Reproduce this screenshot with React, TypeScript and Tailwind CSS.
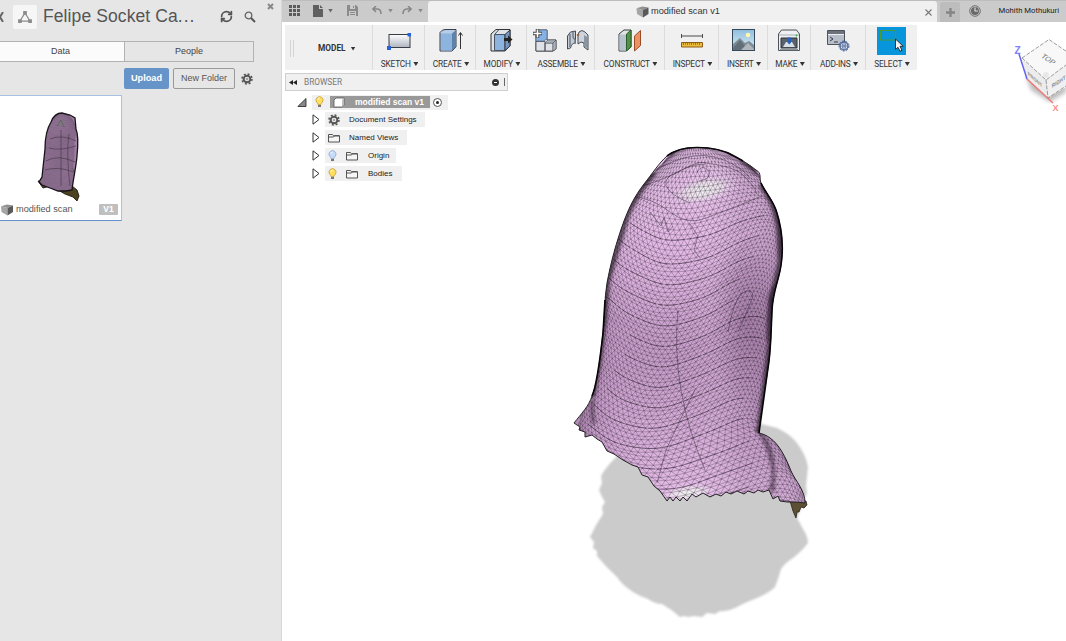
import React from "react";
import { RefreshCw } from "lucide-react";

type Pt = [number, number];

const OUTLINE =
  "M697 147.500 C687 147.500 676 149 667 156 C659 163 652 174 644 184 C634 197 629 208 624 221 C616 243 611 262 607 283 C604 300 605 318 603 333 C600 360 597 385 592 396 C589 406 581 414 574 423 L580 427 L579 430 L585 432 L585 437 L592 435 L597 439 L602 442 L607 451 L614 454 L623 460 L632 465 L638 467 L642 475 L648 477 L654 486 L660 491 L667 501 L670 497 L673 501 L676 497 L680 501 L683 497 L687 501 L692 494 L696 497 L703 493 L710 497 L716 494 L721 496 L726 492 L731 494 L737 491 L744 494 L748 491 L754 493 L758 490 L763 492 L769 490 L773 499 L778 496 L780 501 L787 502 L796 502 L805 503 C805 490 796 482 791 471 C786 458 779 444 770 438 C766 435 763 434 759 433 C760 415 765 390 768 368 C771 350 771 330 772 310 C773 290 779 280 781 265 C784 245 781 225 776 210 C772 199 765 192 761 183 C759 178 762 173 756 170 C750 165 742 160 734 156 C724 150 710 147.500 697 147.500 Z";

const SHADOW =
  "M617 456 Q609 464 604 471 L601 476 L602 483 L599 490 L602 497 L605 502 L602 507 L603 514 Q596 524 590 537 L594 542 L593 548 L597 551 L597 556 Q606 567 617 577 Q622 585 633 592 Q641 597 648 599 Q655 604 662 604 Q671 609 680 617 L684 616 L688 617 L694 616 L702 617 L707 613 L715 614 L720 611 Q727 612 735 608 Q746 602 757 598 Q769 593 775 587 Q779 577 781 569 Q786 562 793 558 Q803 550 808 543 Q808 537 803 529 L797 518 L807 493 L806 486 L808 467 Q806 455 797 443 Q790 434 777 428 L758 423 L700 430 Z";

const LEFT: Pt[] = [[130, 686], [147, 678], [157, 666], [177, 649], [192, 638], [213, 627], [247, 615], [280, 607], [307, 604], [333, 603], [363, 598], [393, 593], [410, 586], [440, 579], [520, 575]];
const RIGHT: Pt[] = [[130, 715], [148, 722], [163, 746], [180, 761], [193, 767], [213, 777], [247, 782], [273, 780], [300, 773], [330, 772], [373, 768], [410, 763], [433, 766], [450, 782], [472, 792], [490, 803], [520, 806]];

function edge(table: Pt[], y: number): number {
  for (let i = 1; i < table.length; i++) {
    if (y <= table[i][0]) {
      const a = table[i - 1];
      const b = table[i];
      return a[1] + ((b[1] - a[1]) * Math.max(0, y - a[0])) / (b[0] - a[0]);
    }
  }
  return table[table.length - 1][1];
}

const COLS = 36;
const ROWS = 104;

function vertex(i: number, j: number): Pt {
  const u = (i + (j % 2) * 0.5) / COLS;
  const base = 126 + j * 4.1;
  const t = Math.sin((u - 0.5) * Math.PI * 0.86) / 2 / Math.sin(Math.PI * 0.43) + 0.5;
  const ramp = Math.min(1, Math.max(0, (base - 170) / 70));
  const wave = Math.cos(((u - 0.4) * Math.PI * 2) / 0.86);
  const y = base + wave * 15 * ramp - (1 - ramp) * Math.cos((u - 0.5) * Math.PI) * 5;
  const l = edge(LEFT, base);
  const r = edge(RIGHT, base);
  return [l + (r - l) * t + Math.sin(j * 0.13 + u * 6) * 2 + Math.sin(i * 12.9 + j * 7.3) * 0.5, y + Math.sin(i * 7.1 + j * 3.7) * 0.45];
}

function polyline(points: Pt[]): string {
  return points.map((p, k) => (k ? "L" : "M") + p[0].toFixed(1) + " " + p[1].toFixed(1)).join("");
}

function buildMesh() {
  let rows = "";
  let strong = "";
  let diagonals = "";
  for (let j = 0; j < ROWS; j++) {
    const line: Pt[] = [];
    for (let i = 0; i <= COLS; i++) {
      line.push(vertex(i, j));
      const down = vertex(i, j + 1);
      const side = vertex(j % 2 ? i + 1 : i - 1, j + 1);
      diagonals += polyline([side, vertex(i, j), down]);
    }
    rows += polyline(line);
    if (j > 20 && j % 5 === 0) {
      const start = (j * 7) % 9;
      strong += polyline(line.slice(start, start + 26));
    }
  }
  return { rows, diagonals, strong };
}

const MESH = buildMesh();

const CONTOURS = [
  "M642 186 Q668 178 684 169 T706 163 Q730 166 741 173 Q754 185 757 194",
  "M666 186 Q664 177 676 173 Q690 164 706 164 M666 186 Q672 196 688 202",
  "M697 172 Q702 164 708 170 Q711 175 706 179 L699 181",
  "M640 178 Q664 164 684 158 T724 160 Q740 166 750 178",
  "M632 196 Q652 198 670 212 T706 218 Q738 206 762 196",
  "M650 212 L661 226 L664 218 L668 232 L673 226",
  "M690 224 L698 236 L694 250 L700 258",
  "M705 470 Q688 430 681 390 Q674 350 678 310",
  "M657 483 L666 450 L680 420 L695 390",
  "M728 332 Q733 302 742 293 Q752 287 753 296 Q748 310 738 332",
];

const DARK_FOLDS = "M757 428 Q768 444 771 460 Q776 474 770 490 M761 434 Q777 450 773 492 M593 400 Q591 412 594 424 M774 286 Q767 310 768 341";

function ScanModel() {
  return (
    <svg className="absolute inset-0 h-full w-full" viewBox="282 22 784 619" aria-label="Modified scan mesh">
      <defs>
        <clipPath id="scan-clip"><path d={OUTLINE} /></clipPath>
        <linearGradient id="scan-side" x1="0" x2="1">
          <stop offset="0" stopColor="#54385b" stopOpacity=".3" />
          <stop offset=".2" stopColor="#bd8bc1" stopOpacity=".08" />
          <stop offset=".5" stopColor="#fff" stopOpacity="0" />
          <stop offset=".72" stopColor="#6b4a70" stopOpacity=".12" />
          <stop offset="1" stopColor="#493050" stopOpacity=".12" />
        </linearGradient>
        <linearGradient id="scan-light" x1="0" x2="0" y1="0" y2="1">
          <stop offset="0" stopColor="#f2cdf5" stopOpacity=".8" />
          <stop offset=".3" stopColor="#f2cdf5" stopOpacity=".2" />
          <stop offset=".55" stopColor="#8f6a92" stopOpacity=".16" />
          <stop offset="1" stopColor="#f2cdf5" stopOpacity=".5" />
        </linearGradient>
        <radialGradient id="scan-top"><stop stopColor="#f1f1f1" /><stop offset=".5" stopColor="#eee6ef" stopOpacity=".85" /><stop offset="1" stopColor="#eccdf0" stopOpacity="0" /></radialGradient>
        <radialGradient id="scan-shade"><stop stopColor="#664269" stopOpacity=".32" /><stop offset="1" stopColor="#664269" stopOpacity="0" /></radialGradient>
        <filter id="shadow-soften"><feGaussianBlur stdDeviation="0.8" /></filter>
        <filter id="fold-soften"><feGaussianBlur stdDeviation="1.5" /></filter>
      </defs>
      <path d={SHADOW} fill="#cbcbcb" filter="url(#shadow-soften)" />
      <path d="M790 501 L806 501 L807 505 L804 508 L801 507 L799 512 L797 512 L796 518 L793 511 Z" fill="#5c5034" stroke="#292416" strokeWidth=".8" />
      <g clipPath="url(#scan-clip)">
        <path d={OUTLINE} fill="#deb3e0" />
        <path d={OUTLINE} fill="url(#scan-light)" />
        <path d={OUTLINE} fill="url(#scan-side)" />
        <ellipse cx="748" cy="320" rx="38" ry="85" fill="url(#scan-shade)" />
        <ellipse cx="660" cy="350" rx="68" ry="72" fill="url(#scan-shade)" opacity=".35" />
        <ellipse cx="704" cy="190" rx="36" ry="14" transform="rotate(-14 704 190)" fill="url(#scan-top)" />
        <ellipse cx="688" cy="493" rx="28" ry="9" transform="rotate(-8 688 493)" fill="url(#scan-top)" />
        <path d={MESH.rows} fill="none" stroke="#241929" strokeWidth=".5" opacity=".55" />
        <path d={MESH.diagonals} fill="none" stroke="#241929" strokeWidth=".45" opacity=".6" />
        <path d={MESH.strong} fill="none" stroke="#1b1420" strokeWidth=".7" strokeDasharray="14 2 5 1" opacity=".6" />
        {CONTOURS.map((d) => <path key={d} d={d} fill="none" stroke="#201725" strokeWidth=".7" opacity=".6" />)}
        <path d={DARK_FOLDS} fill="none" stroke="#28172b" strokeWidth="3.500" opacity=".5" filter="url(#fold-soften)" />
        <path d="M654 172 Q636 194 627 215 L607 282 L604 320 L598 365 L592 397 M742 160 L758 171 M761 184 Q775 203 779 225 L781 262 L772 300 L771 340 L762 410 L759 433" fill="none" stroke="#150d18" strokeWidth="6" opacity=".6" filter="url(#fold-soften)" />
      </g>
      <path d={OUTLINE} fill="none" stroke="#252027" strokeWidth="1" />
      <path d="M667 156 C676 149 687 147.500 697 147.500 C710 147.500 724 150 734 156 L743 161 M761 183 C765 192 772 199 776 210 C781 225 784 245 781 265 C779 280 773 290 772 310 C771 330 771 350 768 368 L759 433 M592 396 C597 385 600 360 603 333 L605 300" fill="none" stroke="#090609" strokeWidth="1.600" />
    </svg>
  );
}

function ViewCube() {
  return (
    <svg className="absolute right-0 top-[13px] h-[86px] w-[60px]" viewBox="1006 35 60 86">
      <defs><filter id="cube-shadow"><feGaussianBlur stdDeviation="2" /></filter></defs>
      <path d="M1026 76 L1031 90 L1050 102 L1066 92 L1066 78 Z" fill="#bbb" filter="url(#cube-shadow)" />
      <path d="M1022 58 L1049 39.500 L1076 58 L1046 80 Z" fill="#f8f8f8" />
      <path d="M1022 58 L1046 80 L1048 98 L1027 79 Z" fill="#ececec" />
      <path d="M1046 80 L1076 58 L1073 83 L1048 98 Z" fill="#f0f0f0" />
      <path d="M1022 58 L1049 39.500 L1076 58 M1022 58 L1046 80 L1070 62 M1046 80 L1048 98 L1066 86" fill="none" stroke="#858585" strokeDasharray="4 1.500" strokeWidth=".8" />
      <circle cx="1046" cy="75" r="3" fill="#e8e8e8" />
      <path d="M1019 54 L1027 79" stroke="#6262ee" strokeWidth="1.500" />
      <path d="M1027 79 L1053 103" stroke="#ee7777" strokeWidth="1.400" />
      <g fontFamily="Liberation Sans, sans-serif">
        <text x="1014.500" y="53.500" fontSize="10" fontWeight="700" fill="#8080fa">Z</text>
        <text x="1052.500" y="111" fontSize="9" fontWeight="700" fill="#fa8a8a">X</text>
        <text fontSize="8" fill="#727272" transform="matrix(.75 .5 -.65 .65 1040.500 57)">TOP</text>
        <text fontSize="5.500" fill="#888" fontWeight="700" transform="matrix(.75 .68 .1 1 1028 75)">FRONT</text>
        <text fontSize="5.500" fill="#888" fontWeight="700" transform="matrix(.8 -.52 .1 1 1052 88)">RIGHT</text>
      </g>
    </svg>
  );
}

function Cube({ className }: { className: string }) {
  return (
    <svg className={className} viewBox="0 0 12 12">
      <path d="M0 2.300 L6 .5 L12 1.500 L6.500 4 Z" fill="#909090" />
      <path d="M0 2.300 L6.500 4 V11.500 L0.500 8 Z" fill="#a5a5a5" />
      <path d="M6.500 4 L12 1.500 V8 L6.500 11.500 Z" fill="#595959" />
    </svg>
  );
}

function Gear({ className }: { className: string }) {
  return (
    <svg className={className} viewBox="0 0 14 14" fill="none" stroke="#555">
      <circle cx="7" cy="7" r="3.900" strokeWidth="2.300" />
      <circle cx="7" cy="7" r="5.800" strokeWidth="1.800" strokeDasharray="2.300 2.255" />
      <circle cx="7" cy="7" r="1" strokeWidth=".6" />
    </svg>
  );
}

function ToolIcon({ name }: { name: string }) {
  switch (name) {
    case "SKETCH":
      return <svg className="h-[26px] w-[26px]" viewBox="0 0 26 26"><defs><linearGradient id="sk" x2="0" y2="1"><stop stopColor="#fff" /><stop offset="1" stopColor="#aeb4c0" /></linearGradient></defs><rect x="3" y="6.500" width="21" height="13" fill="url(#sk)" stroke="#383c43" /><path d="M1 18h4v4H1zM21.500 5h3.500v3.500h-3.500z" fill="#2761dc" /></svg>;
    case "CREATE":
      return <svg className="h-[26px] w-[26px]" viewBox="0 0 26 26"><path d="M3 4.500 Q5 1.500 8 1.500 H19 V19 L15 23 H3 Z" fill="#b5cbe6" stroke="#39414d" /><path d="M4 5.500h11v17H4z" fill="#8db3df" /><path d="M15 5.500l4-3.500V19l-4 3.500z" fill="#5f82ab" /><path d="M23.500 21V5m-2 2.500 2-3 2 3" fill="none" stroke="#333" /></svg>;
    case "MODIFY":
      return <svg className="h-[26px] w-[26px]" viewBox="0 0 26 26"><path d="M3 6 L8 1.500 H22 V18 L17 23 H3 Z" fill="#dfe3e8" stroke="#333" /><path d="M7 6 L11 1.500 M6.500 6.500h10.500V22.500H6.500z" fill="#8db3df" stroke="#485464" /><path d="M17 6.500l5-4.500v16l-5 4.500z" fill="#7797bf" stroke="#334" /><path d="M16 10h4V7.500l4.500 4-4.500 4V13h-4z" fill="#222" /></svg>;
    case "ASSEMBLE":
      return <svg className="h-[26px] w-[60px]" viewBox="0 0 60 26"><path d="M5 5l3-3h8v10h9v9l-3 2H5z" fill="#cfd3da" stroke="#343a42" /><path d="M5 5l3-3h8v8l-3 3H5z" fill="#85b1e5" stroke="#52677f" strokeWidth=".6" /><path d="M5 13.500h9V23H5zM14 15h8v8h-8z" fill="#dfe2e7" stroke="#454a52" strokeWidth=".8" /><path d="M22 15l3-3v9l-3 2zM14 15l3-3h8l-3 3z" fill="#a9b2bd" stroke="#555" strokeWidth=".5" /><path d="M6.500 1v9M2 5.500h9" stroke="#444" strokeWidth="3.500" /><path d="M6.500 1.500v8M2.500 5.500h8" stroke="#fff" strokeWidth="1.600" /><path d="M36.500 21V8l3-4 5-1v12q-4 0-5 5z" fill="#c6ccd4" stroke="#434b55" /><path d="M39 6v13M42 4v5l2 3v4" stroke="#77818d" strokeWidth="1.600" fill="none" /><path d="M48 4q3-3 6 0l3 3v15l-4-3v-4l-3-1-3 2V8z" fill="#ced4dc" stroke="#434b55" /><path d="M53 7l3 2v11l-3-2z" fill="#8995a3" /><circle cx="47" cy="7" r="1.300" fill="#a5653d" /></svg>;
    case "CONSTRUCT":
      return <svg className="h-[26px] w-[28px]" viewBox="0 0 28 26"><path d="M3 6l5-4h7v17l-5 4H3z" fill="#e2e5e8" stroke="#383d42" /><path d="M3.500 6.500h7v16h-7z" fill="#b9c3ce" /><path d="M10.500 6l4.500-4v17l-4.500 4z" fill="#559044" stroke="#285f2b" /><path d="M18.500 8l6-5.500v15l-6 5.500z" fill="#eb9362" stroke="#9c4c25" /></svg>;
    case "INSPECT":
      return <svg className="h-[26px] w-[26px]" viewBox="0 0 26 26"><path d="M2.500 6v4m0-2h21m0-2v4" fill="none" stroke="#4a4b4d" /><path d="M2.500 14.500h21v4.500h-21z" fill="#e9bd3b" stroke="#8f5c19" /><path d="M4.500 15v2m2-2v1.500m2-1.500v2m2-2v1.500m2-1.500v2m2-2v1.500m2-1.500v2m2-2v1.500m2-1.500v2" stroke="#755a1d" strokeWidth=".7" /></svg>;
    case "INSERT":
      return <svg className="h-[26px] w-[26px]" viewBox="0 0 26 26"><defs><linearGradient id="sky" x2="0" y2="1"><stop stopColor="#8fbfe0" /><stop offset="1" stopColor="#ddecee" /></linearGradient></defs><rect x="2.500" y="1.500" width="22" height="21" fill="url(#sky)" stroke="#354958" /><circle cx="18" cy="7" r="2.300" fill="#fff5b0" /><path d="M3 16l7-6 5 5 4-2 5 4v5H3z" fill="#7f8b95" /><path d="M3 20l7-8 8 10H3z" fill="#626f7a" /><path d="M18 15l6 6v1H11z" fill="#b0b8be" /></svg>;
    case "MAKE":
      return <svg className="h-[26px] w-[26px]" viewBox="0 0 26 26"><path d="M2.500 6l3-4h15l3 4v16.500h-21z" fill="#eef0f3" stroke="#4b5259" /><path d="M3 7h20" stroke="#aab0b7" /><path d="M5 10h16v10H5z" fill="#59636e" stroke="#333" /><path d="M7 19l3-5h6l3 5z" fill="#d7e0e9" /><path d="M11.500 9.500h3.500v5l-1.700 2-1.800-2z" fill="#2862b8" /><path d="M4 21.500h18" stroke="#8b949b" strokeWidth="1.500" /><circle cx="20.500" cy="7.500" r=".9" fill="#2bbd38" /></svg>;
    case "ADD-INS":
      return <svg className="h-[26px] w-[28px]" viewBox="0 0 28 26"><path d="M3.500 2.500h17v14h-17z" fill="#b8bec9" stroke="#4d535c" /><path d="M4 3h16v3H4z" fill="#6d737d" /><path d="M4 6.500h16" stroke="#eee" /><path d="M6 9l3 2-3 2m4 1h4" fill="none" stroke="#343c49" /><circle cx="20" cy="18" r="4" fill="#d5dfef" stroke="#50699a" strokeWidth="1.300" /><circle cx="20" cy="18" r="5" fill="none" stroke="#50699a" strokeWidth="1" strokeDasharray="2 1.500" /><path d="M16 18h8m-4-4v8m-2-7q2 3 0 6m4-6q-2 3 0 6" fill="none" stroke="#50699a" strokeWidth=".7" /></svg>;
    default:
      return <svg className="h-[28px] w-[29px]" viewBox="0 0 29 28"><path fill="#0795dc" d="M0 0h29v28H0z" /><path d="M3.500 3.500h15v9.500h-15z" fill="none" stroke="#4a9a35" strokeWidth="1.200" /><path d="M18.500 12v10.500l2.500-2.200 2 4 2-1-2-4h3.200z" fill="#f4f4f4" stroke="#222" strokeWidth=".9" /></svg>;
  }
}

const TOOLS = [
  { name: "SKETCH", box: "w-[52px]" },
  { name: "CREATE", box: "w-[51px]" },
  { name: "MODIFY", box: "w-[51px]" },
  { name: "ASSEMBLE", box: "w-[68px]" },
  { name: "CONSTRUCT", box: "w-[70px]" },
  { name: "INSPECT", box: "w-[54px]" },
  { name: "INSERT", box: "w-[49px]" },
  { name: "MAKE", box: "w-[43px]" },
  { name: "ADD-INS", box: "w-[55px]" },
  { name: "SELECT", box: "w-[51px]" },
];

function Caret({ className = "bg-[#333]" }: { className?: string }) {
  return <span className={`block h-[4px] w-[5px] shrink-0 [clip-path:polygon(0_0,100%_0,50%_100%)] ${className}`} />;
}

function Toolbar() {
  return (
    <div className="ml-[3px] mt-[3px] flex h-[45px] w-[632px] bg-[#f0f0f0]">
      <div className="flex w-[88px] items-center border-r border-[#dcdcdc] pl-[5px] pt-[2px]">
        <span className="h-[17px] w-[4px] border-x border-[#d5d5d5]" />
        <span className="ml-[24px] font-[Roboto,sans-serif] text-[8.300px] font-bold leading-none text-[#333]">MODEL</span>
        <span className="ml-[5px]"><Caret /></span>
      </div>
      {TOOLS.map((t) => (
        <div key={t.name} className={`flex shrink-0 flex-col items-center border-r ${t.box} ${t.name === "SELECT" ? "border-transparent pt-[2px]" : "border-[#dcdcdc] pt-[3px]"}`}>
          <div className={`flex shrink-0 items-start ${t.name === "SELECT" ? "h-[30px]" : "h-[29px]"}`}><ToolIcon name={t.name} /></div>
          <div className="mt-[2px] flex items-center gap-[2.500px] pl-[2px] font-[Roboto,sans-serif] text-[8.300px] leading-[10px] tracking-[-0.15px] text-[#333]">
            <span>{t.name}</span><Caret />
          </div>
        </div>
      ))}
    </div>
  );
}

function Folder() {
  return <svg className="h-[10px] w-[12px] shrink-0" viewBox="0 0 12 10"><path d="M.5 9V1.500h4l1 1.300h6V9zM.5 4h5l1-1.200h5" fill="#f6f6f6" stroke="#444" strokeWidth=".9" /></svg>;
}

function Bulb({ off = false }: { off?: boolean }) {
  return <svg className="h-[12px] w-[9px] shrink-0" viewBox="0 0 9 12"><path d="M3 8.500Q3 7 1.500 6A3.500 3.500 0 1 1 7.500 6Q6 7 6 8.500z" fill={off ? "#c5dcfb" : "#ffe060"} stroke={off ? "#8ea6cf" : "#c79c35"} strokeWidth=".8" /><path d="M3 9h3v2H3z" fill="#777" /><path d="M3 3.500Q3 2 4.500 2" fill="none" stroke="#fff" /></svg>;
}

function Arrow() {
  return <svg className="h-[11px] w-[8px] shrink-0" viewBox="0 0 8 11"><path d="M1 .8l6 4.700-6 4.700z" fill="#fff" stroke="#333" /></svg>;
}

function TreeRow({ width, icon, bulb, label }: { width: string; icon: React.ReactNode; bulb?: React.ReactNode; label: string }) {
  return (
    <div className="flex h-[18px] items-center pb-px pl-[27px]">
      <Arrow />
      <div className={`ml-[5px] flex h-[15px] items-center bg-[#f0f0f0] pl-[2px] ${width}`}>
        {bulb && <span className="mr-[7px] flex w-[11px] justify-center">{bulb}</span>}
        <span className="flex w-[13px] justify-center">{icon}</span>
        <span className={`whitespace-nowrap pt-px text-[8px] text-[#222] ${bulb ? "ml-[10px]" : "ml-[9px]"}`}>{label}</span>
      </div>
    </div>
  );
}

function Browser() {
  return (
    <div className="ml-[3px] mt-[3px] w-[223px]">
      <div className="flex h-[18px] items-center border border-[#cfcfcf] bg-[#f0f0f0] pl-[3px] pr-[2px] text-[8.300px] text-[#777]">
        <svg className="h-[5px] w-[8px]" viewBox="0 0 8 5"><path d="M4 0v5L0 2.500zm4 0v5L4 2.500z" fill="#222" /></svg>
        <span className="ml-[7px] font-[Roboto,sans-serif] leading-none">BROWSER</span>
        <span className="ml-auto flex h-[7px] w-[7px] items-center justify-center rounded-full bg-[#333]"><span className="h-px w-[3px] bg-white" /></span>
        <span className="ml-[4px] h-[8px] w-[2px] border-r border-[#666]" />
      </div>
      <div className="pt-[2px]">
        <div className="flex h-[18px] items-center pl-[12px]">
          <svg className="h-[9px] w-[10px]" viewBox="0 0 10 9"><path d="M9 .5v8H.8z" fill="#888" stroke="#222" strokeWidth=".8" /></svg>
          <div className="ml-[5px] flex h-[15px] w-[136px] items-center bg-[#f0f0f0] pl-[3px]">
            <Bulb />
            <div className="ml-[6px] flex h-[12px] w-[100px] items-center bg-[#999] pl-[3px]">
              <svg className="h-[11px] w-[12px]" viewBox="0 0 12 11"><path d="M1 3l2-2h8v7l-2 2H1z" fill="#fff" stroke="#555" strokeWidth=".8" /><path d="M9 3l2-2v7l-2 2z" fill="#bbb" /></svg>
              <span className="ml-[10px] whitespace-nowrap text-[8.500px] font-bold text-white">modified scan v1</span>
            </div>
            <span className="ml-[3px] flex h-[9px] w-[9px] items-center justify-center rounded-full border border-[#555] bg-white"><span className="h-[3px] w-[3px] rounded-full bg-[#222]" /></span>
          </div>
        </div>
        <TreeRow width="w-[100px]" icon={<Gear className="h-[12px] w-[12px]" />} label="Document Settings" />
        <TreeRow width="w-[82px]" icon={<Folder />} label="Named Views" />
        <TreeRow width="w-[71px]" bulb={<Bulb off />} icon={<Folder />} label="Origin" />
        <TreeRow width="w-[77px]" bulb={<Bulb />} icon={<Folder />} label="Bodies" />
      </div>
    </div>
  );
}

function TitleBar() {
  return (
    <div className="flex h-[22px] shrink-0 items-end border-t border-[#bdbdbd] bg-[#cbcbcb]">
      <div className="flex h-[21px] w-[146px] shrink-0 items-center pb-[2px] pl-[7px]">
        <svg className="h-[11px] w-[11px]" viewBox="0 0 11 11"><path d="M0 0h3v3H0zm4 0h3v3H4zm4 0h3v3H8zM0 4h3v3H0zm4 0h3v3H4zm4 0h3v3H8zM0 8h3v3H0zm4 0h3v3H4zm4 0h3v3H8z" fill="#5b5b5b" /></svg>
        <svg className="ml-[13px] h-[12px] w-[11px]" viewBox="0 0 11 12"><path d="M0 0h6v4h4v8H0zM7 0l3 3H7z" fill="#606060" /></svg>
        <span className="ml-[4px]"><Caret className="bg-[#666]" /></span>
        <svg className="ml-[14px] h-[11px] w-[11px]" viewBox="0 0 11 11"><path d="M0 0h9l2 2v9H0z" fill="#8b8b8b" /><path d="M3 0h5v4H3zM2 6h7v5H2z" fill="#cbcbcb" /><path d="M6 1h1v2H6zM3 7h5v1H3zm0 2h5v1H3z" fill="#8b8b8b" /></svg>
        <svg className="ml-[14px] h-[9px] w-[10px]" viewBox="0 0 10 9"><path d="M4 0L1 3l3 3M1 3h4q4 0 4 5" fill="none" stroke="#888" strokeWidth="1.600" /></svg>
        <span className="ml-[6px]"><Caret className="bg-[#888]" /></span>
        <svg className="ml-[9px] h-[9px] w-[10px]" viewBox="0 0 10 9"><path d="M6 0l3 3-3 3M9 3H5Q1 3 1 8" fill="none" stroke="#888" strokeWidth="1.600" /></svg>
        <span className="ml-[6px]"><Caret className="bg-[#888]" /></span>
      </div>
      <div className="flex h-[21px] w-[509px] shrink-0 items-center rounded-t-[3px] bg-[#f0f0f0] pl-[208px] pr-[5px] pt-px">
        <Cube className="h-[12px] w-[13px]" />
        <span className="ml-[2px] whitespace-nowrap text-[9.200px] text-[#333]">modified scan v1</span>
        <svg className="ml-auto h-[7px] w-[7px]" viewBox="0 0 7 7"><path d="M.5.5l6 6m0-6l-6 6" stroke="#777" strokeWidth="1.100" /></svg>
      </div>
      <div className="ml-[3px] flex h-[20px] w-[20px] shrink-0 items-center justify-center rounded-t-[2px] bg-[#bdbdbd]">
        <svg className="h-[9px] w-[9px]" viewBox="0 0 9 9"><path d="M4.500 0v9M0 4.500h9" stroke="#858585" strokeWidth="2.300" /></svg>
      </div>
      <div className="flex h-[20px] flex-1 items-center justify-between pb-[3px] pl-[9px] pr-[7px]">
        <svg className="h-[12px] w-[12px]" viewBox="0 0 12 12"><circle cx="6" cy="6" r="5.300" fill="none" stroke="#707070" /><circle cx="6" cy="6" r="4" fill="#696969" /><path d="M6 2.500V6h3" fill="none" stroke="#ddd" strokeWidth="1.200" /></svg>
        <span className="whitespace-nowrap font-[Roboto,sans-serif] text-[7.700px] text-[#222]">Mohith Mothukuri</span>
      </div>
    </div>
  );
}

const THUMB_BODY = "M62 7 C57 7 53 11 51 16 C46 24 45 33 45 43 C44 53 43 62 42 71 L39 76 L42 79 L50 82 L58 85 L66 85 L72 84 C73 74 76 62 77 50 C78 40 79 30 76 23 L75 12 L70 9 Z";

function Thumbnail() {
  return (
    <svg className="h-[98px] w-[121px]" viewBox="0 0 121 98">
      <defs><clipPath id="thumb-clip"><path d={THUMB_BODY} /></clipPath></defs>
      <path d="M38 75 L43 82 L50 80 L58 84 L65 88 L73 91 L77 95 L79 90 L77 84 L72 80 Z" fill="#4a4220" stroke="#1e1b10" strokeWidth=".9" />
      <g clipPath="url(#thumb-clip)">
        <path d={THUMB_BODY} fill="#a07ea3" />
        <path d={MESH.rows} transform="translate(-60 -22) scale(.174 .2)" fill="none" stroke="#2c2230" strokeWidth="1.400" opacity=".65" />
        <path d="M57 20 L61 14 L64 21 M50 33 Q62 28 76 35 M49 42 Q60 45 76 40 M46 55 Q58 48 75 56 M45 64 Q58 60 74 66 M61 24 V80 M69 28 Q66 48 70 80" fill="none" stroke="#332838" strokeWidth=".7" opacity=".7" />
        <ellipse cx="61" cy="17" rx="4" ry="4" fill="#777979" opacity=".55" />
      </g>
      <path d={THUMB_BODY} fill="none" stroke="#171218" strokeWidth="1.300" />
    </svg>
  );
}

function DataPanel() {
  return (
    <aside className="relative flex w-[282px] shrink-0 flex-col border-r border-[#d8d8d8] bg-[#e6e6e6]">
      <svg className="absolute left-[267px] top-[3px] h-[7px] w-[7px]" viewBox="0 0 7 7"><path d="M1 1l5 5m0-5L1 6" stroke="#888" strokeWidth="2" /></svg>
      <header className="flex h-[41px] shrink-0 items-center pb-[8px]">
        <svg className="h-[10px] w-[4px]" viewBox="0 0 4 10"><path d="M3 0L0 5l3 5" fill="none" stroke="#666" strokeWidth="2" /></svg>
        <div className="ml-[9px] flex h-[24px] w-[24px] items-center justify-center rounded-[2px] bg-[#f6f6f6]">
          <svg className="h-[12px] w-[14px]" viewBox="0 0 15 13"><path d="M7.500 2L2 11h11z" fill="none" stroke="#8c8c8c" strokeWidth="1.300" /><path d="M5.500 0h4v4h-4zM0 9h4v4H0zm11 0h4v4h-4z" fill="#8c8c8c" /></svg>
        </div>
        <h1 className="ml-[6px] w-[158px] whitespace-nowrap text-[17.500px] leading-none tracking-[0.1px] text-[#555]">Felipe Socket Ca<span className="tracking-[1px]">...</span></h1>
        <RefreshCw className="ml-[19px] h-[13px] w-[13px] text-[#555]" strokeWidth={3.2} />
        <svg className="ml-[11px] h-[12px] w-[12px]" viewBox="0 0 12 12"><circle cx="4.500" cy="4.500" r="3.300" fill="none" stroke="#666" strokeWidth="1.300" /><path d="M7 7l4 4" stroke="#555" strokeWidth="2" /></svg>
      </header>
      <div className="flex h-[21px] w-[254px] shrink-0 border border-l-0 border-[#b2b2b2] text-[9px] leading-[18px] text-[#444]">
        <div className="w-[125px] border-r border-[#b2b2b2] bg-[#fbfbfb] pr-[3px] text-center">Data</div>
        <div className="flex-1 text-center">People</div>
      </div>
      <div className="flex h-[33px] shrink-0 items-center pl-[124px]">
        <button className="h-[21px] w-[45px] rounded-[2px] bg-[#6694c9] text-[9.200px] font-bold text-white">Upload</button>
        <button className="ml-[4px] h-[21px] w-[62px] whitespace-nowrap rounded-[2px] border border-[#999] text-[9px] text-[#555]">New Folder</button>
        <Gear className="ml-[6px] h-[12px] w-[12px]" />
      </div>
      <article className="flex h-[126px] w-[122px] shrink-0 flex-col border border-l-0 border-[#a8c1e0] border-b-[#6592cc] bg-white">
        <div className="flex h-[104px] items-end"><div className="mb-[-4px] flex"><Thumbnail /></div></div>
        <div className="flex h-[19px] items-center pl-[1px] pr-[3px]">
          <Cube className="h-[12px] w-[12px]" />
          <span className="ml-[3px] whitespace-nowrap text-[9.200px] text-[#555]">modified scan</span>
          <span className="ml-auto flex h-[11px] w-[19px] items-center justify-center rounded-[1px] bg-[#bfbfbf] text-[8.500px] font-bold text-white">V1</span>
        </div>
      </article>
    </aside>
  );
}

export default function App() {
  return (
    <div className="flex h-[641px] w-[1066px] overflow-hidden bg-white font-['Liberation_Sans',Arial,sans-serif]">
      <DataPanel />
      <main className="flex min-w-0 flex-1 flex-col">
        <TitleBar />
        <section className="relative flex-1 overflow-hidden bg-white">
          <ScanModel />
          <div className="relative">
            <Toolbar />
            <Browser />
          </div>
          <ViewCube />
        </section>
      </main>
    </div>
  );
}
